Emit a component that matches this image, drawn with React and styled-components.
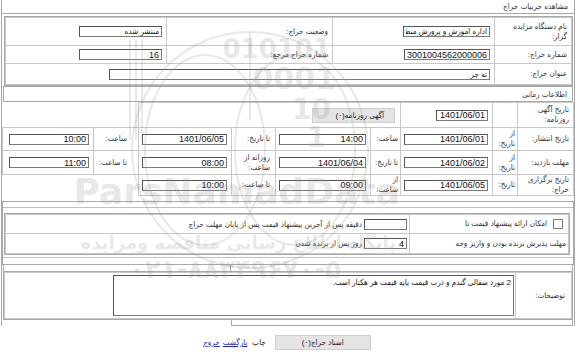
import React from 'react';
import styled, { createGlobalStyle } from 'styled-components';

const GlobalStyle = createGlobalStyle`
  html, body { margin: 0; padding: 0; background: #fff; }
  body {
    font-family: "Liberation Sans", "DejaVu Sans Condensed", "DejaVu Sans", sans-serif;
    font-size: 8px;
    color: #333;
  }
`;

const Page = styled.div`
  direction: rtl;
  width: 576px;
  height: 352px;
  position: relative;
  overflow: hidden;
`;

const Frame = styled.div`
  margin: 0 1px;
  border: 1px solid #a8a8a8;
  border-top: none;
  border-bottom: none;
`;

const Title = styled.div`
  height: 13px;
  line-height: 14px;
  padding-right: 6px;
  border-bottom: 1px solid #a8a8a8;
`;

const Box = styled.div`
  margin: ${p => p.$m || '2px 1px 0'};
  border: 1px solid #a8a8a8;
`;

const Table = styled.table`
  width: 100%;
  border-collapse: collapse;
  table-layout: fixed;
`;

const Col = styled.col`
  width: ${p => (p.$w ? `${p.$w}px` : 'auto')};
`;

const Row = styled.tr`
  height: ${p => p.$h}px;
`;

const Cell = styled.td`
  border: 1px solid #c8c8c8;
  padding: 0 ${p => p.$pr ?? 4}px 0 ${p => p.$pl ?? 3}px;
  text-align: right;
  vertical-align: middle;
  line-height: 10px;
  white-space: ${p => (p.$nowrap ? 'nowrap' : 'normal')};
`;

const Field = styled.input`
  box-sizing: border-box;
  display: block;
  margin-right: 0;
  margin-left: auto;
  width: ${p => (p.$w ? `${p.$w}px` : '100%')};
  height: 11px;
  padding: 0 2px;
  border: 1px solid #7a7a7a;
  border-left-color: #555;
  border-top-color: #555;
  background: #fff;
  font-family: inherit;
  font-size: ${p => (p.$fa ? 8 : 9)}px;
  line-height: 9px;
  color: #111;
  text-align: right;
  direction: rtl;
  outline: none;
`;

const InlineField = styled(Field)`
  display: inline-block;
  vertical-align: middle;
  margin: 0 0 0 2px;
`;

const Section = styled.div`
  margin: 0 1px;
  border: 1px solid #a8a8a8;
  height: 14px;
  line-height: 15px;
  padding-right: 5px;
`;

const GrayButton = styled.span`
  display: inline-block;
  box-sizing: border-box;
  width: ${p => p.$w}px;
  height: 15px;
  line-height: 14px;
  background: #e4e4e4;
  border: 1px solid #cfcfcf;
  text-align: ${p => p.$align || 'right'};
  padding: 0 ${p => p.$pad || 8}px;
  color: #222;
`;

const Strip = styled.div`
  height: ${p => p.$h}px;
  border-bottom: ${p => (p.$top ? 'none' : '1px solid #c0c0c0')};
  border-top: ${p => (p.$top ? '1px solid #c0c0c0' : 'none')};
`;

const Inner = styled.div`
  margin: 5px 3px 2px 1px;
  border: 1px solid #a8a8a8;
`;

const CheckBox = styled.span`
  display: inline-block;
  vertical-align: middle;
  width: 8px;
  height: 8px;
  border: 1px solid #777;
  margin-left: 6px;
  background: #fff;
`;

const GapRow = styled.div`
  display: flex;
  height: 6px;
  margin: 0 1px;
  border: 1px solid #a8a8a8;
  border-top: none;
  border-bottom: none;
`;

const GapPart = styled.div`
  width: ${p => p.$w}px;
  border-left: 1px solid #a8a8a8;
`;

const TailRow = styled.div`
  width: 340px;
  height: 5px;
  margin-right: 1px;
  border: 1px solid #a8a8a8;
  border-top: none;
`;

const TextArea = styled.div`
  box-sizing: border-box;
  width: 401px;
  height: 41px;
  margin: 0 0 0 auto;
  border: 1px solid #7a7a7a;
  border-left-color: #555;
  border-top-color: #555;
  padding: 2px 2px;
  line-height: 10px;
  color: #111;
`;

const Actions = styled.div`
  display: flex;
  justify-content: center;
  align-items: center;
  gap: 3px;
  margin-top: 9px;
  padding-right: 2px;
`;

const PlainText = styled.span`
  color: #222;
  margin: 0 6px 0 2px;
`;

const NavLink = styled.a`
  color: #2a2ab0;
  text-decoration: underline;
`;

const Watermark = styled.div`
  position: absolute;
  inset: 0;
  pointer-events: none;
  color: rgba(150, 150, 150, 0.24);
`;

const WmText = styled.div`
  position: absolute;
  right: ${p => p.$r}px;
  top: ${p => p.$t}px;
  font-family: "DejaVu Sans", sans-serif;
  font-weight: bold;
  font-size: ${p => p.$s}px;
  line-height: 1;
  white-space: nowrap;
  direction: ${p => (p.$rtl ? 'rtl' : 'ltr')};
`;

const LogoSvg = styled.svg`
  position: absolute;
  left: 0;
  top: 0;
`;

function Logo() {
  return (
    <LogoSvg width="576" height="352">
      <g fill="none" stroke="rgba(150,150,150,0.22)" strokeWidth="2">
        <circle cx="250" cy="150" r="118" />
        <ellipse cx="205" cy="150" rx="60" ry="95" />
        <ellipse cx="295" cy="150" rx="60" ry="95" />
        <path d="M130 40 L130 140 M136 40 L136 140 M142 40 L142 140" />
        <path d="M250 32 L250 120" />
      </g>
    </LogoSvg>
  );
}

export default function App() {
  return (
    <Page>
      <GlobalStyle />
      <Frame>
        <Title>مشاهده جزییات حراج</Title>

        <Box $m="2px 1px 0 2px">
          <Table>
            <colgroup>
              <Col $w={77} />
              <Col $w={162} />
              <Col $w={166} />
              <Col />
            </colgroup>
            <tbody>
              <Row $h={28}>
                <Cell>نام دستگاه مزایده گزار:</Cell>
                <Cell><Field $w={87} $fa readOnly value="اداره اموزش و پرورش منط" /></Cell>
                <Cell>وضعیت حراج:</Cell>
                <Cell><Field $w={83} $fa readOnly value="منتشر شده" /></Cell>
              </Row>
              <Row $h={18}>
                <Cell>شماره حراج:</Cell>
                <Cell><Field $w={86} readOnly value="3001004562000006" /></Cell>
                <Cell>شماره حراج مرجع:</Cell>
                <Cell><Field $w={83} readOnly value="16" /></Cell>
              </Row>
              <Row $h={21}>
                <Cell>عنوان حراج:</Cell>
                <Cell colSpan={3}><Field $w={381} $fa readOnly value="ته چر" /></Cell>
              </Row>
            </tbody>
          </Table>
        </Box>

        <Section>اطلاعات زمانی</Section>

        <Table>
          <colgroup>
            <Col $w={56} />
            <Col $w={25} />
            <Col $w={92} />
            <Col $w={30} />
            <Col $w={95} />
            <Col $w={44} />
            <Col $w={93} />
            <Col $w={45} />
            <Col />
          </colgroup>
          <tbody>
            <Row $h={25}>
              <Cell>تاریخ آگهی روزنامه:</Cell>
              <Cell />
              <Cell><Field $w={52} readOnly value="1401/06/01" /></Cell>
              <Cell colSpan={4} $pr={5}>
                <GrayButton $w={83} $pad={10}>آگهی روزنامه(۰)</GrayButton>
              </Cell>
            </Row>
            <Row $h={23}>
              <Cell>تاریخ انتشار:</Cell>
              <Cell $pr={2}>از تاریخ:</Cell>
              <Cell><Field readOnly value="1401/06/01" /></Cell>
              <Cell $pr={2}>ساعت:</Cell>
              <Cell><Field readOnly value="14:00" /></Cell>
              <Cell $pr={5}>تا تاریخ:</Cell>
              <Cell><Field readOnly value="1401/06/05" /></Cell>
              <Cell $pr={11}>ساعت:</Cell>
              <Cell $pl={6}><Field readOnly value="10:00" /></Cell>
            </Row>
            <Row $h={24}>
              <Cell>مهلت بازدید:</Cell>
              <Cell $pr={2}>از تاریخ:</Cell>
              <Cell><Field readOnly value="1401/06/02" /></Cell>
              <Cell $pr={2}>تا تاریخ:</Cell>
              <Cell><Field readOnly value="1401/06/04" /></Cell>
              <Cell $pr={5}>روزانه از ساعت:</Cell>
              <Cell><Field readOnly value="08:00" /></Cell>
              <Cell $pr={11}>تا ساعت:</Cell>
              <Cell $pl={6}><Field readOnly value="11:00" /></Cell>
            </Row>
            <Row $h={20}>
              <Cell>تاریخ برگزاری حراج:</Cell>
              <Cell $pr={2}>تاریخ:</Cell>
              <Cell><Field readOnly value="1401/06/05" /></Cell>
              <Cell $pr={2}>از ساعت:</Cell>
              <Cell><Field readOnly value="09:00" /></Cell>
              <Cell $pr={5}>تا ساعت:</Cell>
              <Cell><Field readOnly value="10:00" /></Cell>
            </Row>
          </tbody>
        </Table>

        <Box $m="5px 0 0">
          <Strip $h={5} />
          <Inner>
            <Table>
              <colgroup>
                <Col $w={159} />
                <Col />
              </colgroup>
              <tbody>
                <Row $h={19}>
                  <Cell $pr={5}><CheckBox />امکان ارائه پیشنهاد قیمت تا</Cell>
                  <Cell $pr={2} $nowrap>
                    <InlineField $w={43} readOnly value="" />
                    دقیقه پس از آخرین پیشنهاد قیمت پس از پایان مهلت حراج
                  </Cell>
                </Row>
                <Row $h={20}>
                  <Cell $pr={2}>مهلت پذیرش برنده بودن و واریز وجه</Cell>
                  <Cell $pr={2} $nowrap>
                    <InlineField $w={43} readOnly value="4" />
                    روز پس از برنده شدن
                  </Cell>
                </Row>
              </tbody>
            </Table>
          </Inner>
          <Strip $h={6} $top />
        </Box>

        <GapRow>
          <GapPart $w={341} />
        </GapRow>

        <Box $m="0 1px">
          <Table>
            <colgroup>
              <Col $w={56} />
              <Col />
            </colgroup>
            <tbody>
              <Row $h={46}>
                <Cell $pr={6}>توضیحات:</Cell>
                <Cell $pr={1}>
                  <TextArea>2 مورد سفالی گندم و ذرت قیمت پایه قیمت هر هکتار است.</TextArea>
                </Cell>
              </Row>
            </tbody>
          </Table>
        </Box>
        <TailRow />
      </Frame>

      <Actions>
        <GrayButton $w={96} $align="center">اسناد حراج(۰)</GrayButton>
        <PlainText>چاپ</PlainText>
        <NavLink href="#">بازگشت</NavLink>
        <NavLink href="#">خروج</NavLink>
      </Actions>

      <Watermark>
        <Logo />
        <WmText $r={245} $t={36} $s={26}>010101</WmText>
        <WmText $r={240} $t={64} $s={30}>0001</WmText>
        <WmText $r={245} $t={96} $s={28}>10</WmText>
        <WmText $r={250} $t={124} $s={28}>1</WmText>
        <WmText $r={176} $t={174} $s={36}>ParsNamadData</WmText>
        <WmText $r={180} $t={234} $s={18} $rtl>پایگاه اطلاع رسانی مناقصه ومزایده</WmText>
        <WmText $r={235} $t={256} $s={26}>۰۲۱-۸۸۳۴۹۶۷۰-۵</WmText>
      </Watermark>
    </Page>
  );
}
